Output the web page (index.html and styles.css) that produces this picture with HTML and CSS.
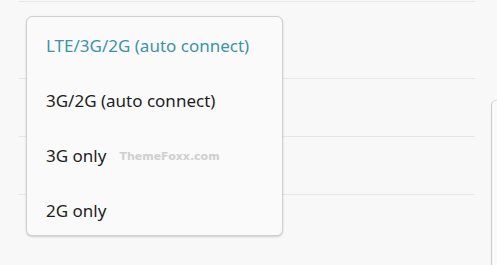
FILE: index.html
```html
<!DOCTYPE html>
<html>
<head>
<meta charset="utf-8">
<link rel="stylesheet" href="styles.css">
</head>
<body>
<div class="screen">
  <div class="list">
    <div class="row row-top"></div>
    <div class="row row-a"></div>
    <div class="row row-b"></div>
    <div class="row row-c"></div>
  </div>
  <div class="side-card"></div>
  <div class="menu">
    <div class="item selected">LTE/3G/2G (auto connect)</div>
    <div class="item">3G/2G (auto connect)</div>
    <div class="item">3G only <span class="mark">ThemeFoxx.com</span></div>
    <div class="item">2G only</div>
  </div>
</div>
</body>
</html>
```

FILE: styles.css
```css
html, body {
  margin: 0;
  padding: 0;
  background: #f8f8f8;
}
.screen {
  position: relative;
  width: 497px;
  height: 265px;
  overflow: hidden;
  display: flex;
  font-family: "Noto Sans", "Open Sans", sans-serif;
}
.list {
  flex-shrink: 0;
  margin-left: 19px;
  width: 456px;
  display: flex;
  flex-direction: column;
}
.row {
  border-bottom: 1px solid #e6e6e6;
}
.row-top { height: 1px; }
.row-a { height: 76px; }
.row-b { height: 57px; }
.row-c { height: 57px; }
.side-card {
  flex-shrink: 0;
  margin-left: 16px;
  margin-top: 100px;
  width: 20px;
  height: 200px;
  border-left: 1px solid #c9c9c9;
  border-top: 1px solid #dcdcdc;
  border-top-left-radius: 5px;
  background: #fafafa;
}
.menu {
  position: absolute;
  left: 26px;
  top: 16px;
  width: 255px;
  height: 217px;
  padding-top: 1px;
  background: #fafafa;
  border: 1px solid #d0d0d0;
  border-radius: 6px;
  box-shadow: 0 1px 2px rgba(0,0,0,0.18);
  display: flex;
  flex-direction: column;
}
.item {
  height: 55px;
  flex-shrink: 0;
  display: flex;
  align-items: center;
  padding-left: 19px;
  font-size: 17px;
  color: #1e1e1e;
}
.item.selected {
  color: #3c93ab;
}
.mark {
  margin-left: 13px;
  font-family: "DejaVu Sans", sans-serif;
  font-weight: bold;
  font-size: 11px;
  color: #cfcfcf;
  position: relative;
  top: 1px;
}
```
